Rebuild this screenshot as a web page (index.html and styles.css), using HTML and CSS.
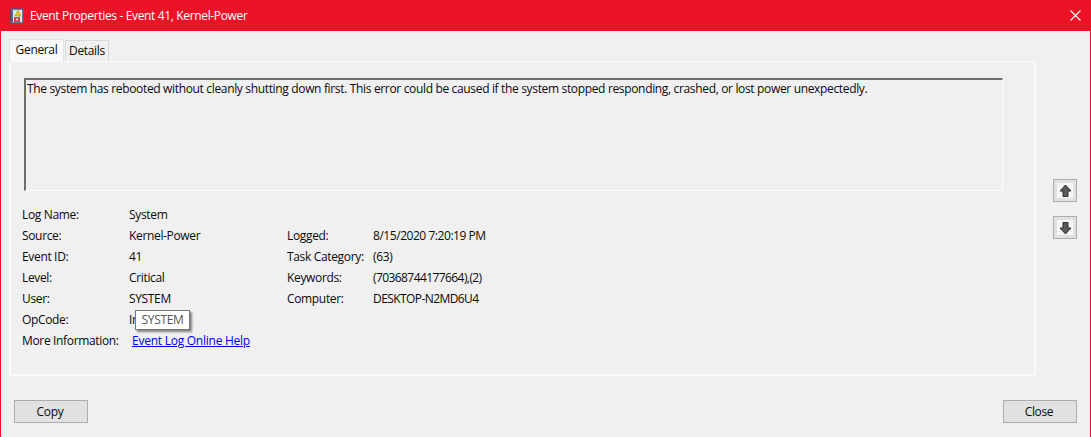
FILE: index.html
```html
<!DOCTYPE html>
<html lang="en">
<head>
<meta charset="utf-8">
<title>Event Properties</title>
<link rel="stylesheet" href="styles.css">
</head>
<body>
<div class="window">
  <header class="titlebar">
    <svg class="app-icon" width="16" height="16" viewBox="0 0 16 16">
      <rect x="2" y="1" width="12" height="14" fill="#7f95c4" stroke="#4a5f94" stroke-width="1"/>
      <rect x="4" y="2" width="9" height="12" fill="#e8e6e0"/>
      <path d="M1 3h3M1 5h3M1 7h3M1 9h3M1 11h3M1 13h3" stroke="#30406c" stroke-width="1"/>
      <path d="M9 2l3 6H6z" fill="#f2c21a" stroke="#a87f10" stroke-width=".5"/>
      <rect x="5" y="9" width="6" height="5" fill="#c8434a"/>
      <rect x="7" y="10.500" width="2" height="2" fill="#f3d8d8"/>
    </svg>
    <span class="title">Event Properties - Event 41, Kernel-Power</span>
    <svg class="close-x" width="11" height="11" viewBox="0 0 11 11"><path d="M.5.500l10 10M10.500.500l-10 10" stroke="#fff" stroke-width="1.100" fill="none"/></svg>
  </header>
  <div class="content">
    <div class="main-row">
      <div class="tabs-area">
        <div class="tabs">
          <div class="tab active">General</div>
          <div class="tab">Details</div>
        </div>
        <section class="panel">
          <div class="message">The system has rebooted without cleanly shutting down first. This error could be caused if the system stopped responding, crashed, or lost power unexpectedly.</div>
          <div class="fields">
            <div class="col-left">
              <div class="row"><span class="lbl">Log Name:</span><span>System</span></div>
              <div class="row"><span class="lbl">Source:</span><span>Kernel-Power</span></div>
              <div class="row"><span class="lbl">Event ID:</span><span>41</span></div>
              <div class="row"><span class="lbl">Level:</span><span>Critical</span></div>
              <div class="row"><span class="lbl">User:</span><span>SYSTEM</span></div>
              <div class="row"><span class="lbl">OpCode:</span><span class="op">Info<span class="tooltip">SYSTEM</span></span></div>
              <div class="row"><span class="lbl lbl-more">More Information:</span><a class="help" href="#">Event Log Online Help</a></div>
            </div>
            <div class="col-right">
              <div class="row"><span class="lbl2">Logged:</span><span class="tight">8/15/2020 7:20:19 PM</span></div>
              <div class="row"><span class="lbl2">Task Category:</span><span>(63)</span></div>
              <div class="row"><span class="lbl2">Keywords:</span><span class="tighter">(70368744177664),(2)</span></div>
              <div class="row"><span class="lbl2">Computer:</span><span class="tighter">DESKTOP-N2MD6U4</span></div>
            </div>
          </div>
        </section>
      </div>
      <div class="arrows">
        <button class="arrow" type="button" aria-label="Previous">
          <svg width="13" height="14" viewBox="0 0 13 14"><path d="M6.500 1L12 7H9v5.500H4V7H1z" fill="#5a5a5a" stroke="#2e2e2e" stroke-width="1"/></svg>
        </button>
        <button class="arrow" type="button" aria-label="Next">
          <svg width="13" height="14" viewBox="0 0 13 14"><path d="M6.500 13L12 7H9V1.500H4V7H1z" fill="#5a5a5a" stroke="#2e2e2e" stroke-width="1"/></svg>
        </button>
      </div>
    </div>
    <footer class="footer">
      <button class="btn" type="button">Copy</button>
      <button class="btn" type="button">Close</button>
    </footer>
  </div>
</div>
</body>
</html>
```
FILE: styles.css
```css
* { box-sizing: border-box; }
html, body { margin: 0; padding: 0; height: 100%; overflow: hidden; }
body {
  font-family: "Open Sans", "Noto Sans", sans-serif;
  font-size: 12px;
  letter-spacing: -0.34px;
  color: #0a0a0a;
  background: #f0f0f0;
}
.window {
  width: 1091px;
  height: 437px;
  display: flex;
  flex-direction: column;
  border-left: 1px solid #ec1328;
  border-right: 1px solid #ec1328;
}
.titlebar {
  height: 31px;
  flex: none;
  margin: 0 -1px;
  padding: 0 10px 0 9px;
  background: #ec1328;
  color: #fff;
  display: flex;
  align-items: center;
}
.app-icon { flex: none; }
.title { margin-left: 5px; flex: 1; letter-spacing: -0.35px; }
.close-x { flex: none; }
.content {
  flex: 1;
  display: flex;
  flex-direction: column;
  padding: 9px 13px 14px 8px;
}
.main-row { display: flex; flex: none; height: 336px; }
.tabs-area { width: 1027px; flex: none; display: flex; flex-direction: column; }
.tabs { display: flex; height: 21px; align-items: flex-end; position: relative; z-index: 1; }
.tab {
  height: 21px;
  width: 44px;
  margin-left: 1px;
  border: 1px solid #d9d9d9;
  border-bottom: 0;
  background: #f0f0f0;
  text-align: center;
  line-height: 20px;
}
.tab.active {
  width: 55px;
  height: 23px;
  margin-left: 0;
  border-color: #e3e3e3;
  background: #fafafa;
  line-height: 19px;
  margin-bottom: -1px;
}
.panel {
  border: 2px solid #fafafa;
  border-top-width: 1px;
  padding: 16px 31px 0 11px;
  width: 1027px;
  height: 315px;
  flex: none;
}
.message {
  height: 113px;
  margin-left: 2px;
  padding: 0 0 0 1px;
  border-top: 2px solid #6d6d6d;
  border-left: 2px solid #6d6d6d;
  border-right: 1px solid #fafafa;
  border-bottom: 1px solid #fafafa;
  color: #0a0a10;
  line-height: 17px;
}
.fields { display: flex; margin-top: 13px; }
.col-left { width: 265px; flex: none; }
.col-right { flex: 1; padding-top: 21px; }
.row { height: 21px; display: flex; line-height: 21px; white-space: nowrap; }
.lbl { width: 107px; flex: none; }
.lbl-more { width: 110px; }
.lbl2 { width: 86px; flex: none; }
.tight { letter-spacing: -0.45px; }
.tighter { letter-spacing: -0.58px; }
.op { position: relative; }
.help { color: #0000ee; text-decoration: underline; letter-spacing: -0.25px; }
.tooltip {
  position: absolute;
  left: 6px;
  top: 1px;
  height: 20px;
  width: 55px;
  border: 1px solid #767676;
  background: #fff;
  color: #575757;
  line-height: 17px;
  text-align: center;
  box-shadow: 2px 2px 2px rgba(0, 0, 0, 0.45);
}
.arrows {
  display: flex;
  flex-direction: column;
  gap: 14px;
  margin-left: 17px;
  padding-top: 139px;
}
.arrow {
  width: 24px;
  height: 23px;
  padding: 0;
  border: 1px solid #adadad;
  background: #e1e1e1;
  display: flex;
  align-items: center;
  justify-content: center;
  box-shadow: inset 0 0 0 3px #e1e1e1, inset 0 0 0 10px #f7f7f7;
}
.footer { display: flex; justify-content: space-between; margin-top: 24px; padding-left: 5px; }
.btn {
  width: 74px;
  height: 23px;
  padding: 0 2px 0 0;
  border: 1px solid #adadad;
  background: #e1e1e1;
  font: inherit;
  letter-spacing: inherit;
  color: #0a0a0a;
}
```
